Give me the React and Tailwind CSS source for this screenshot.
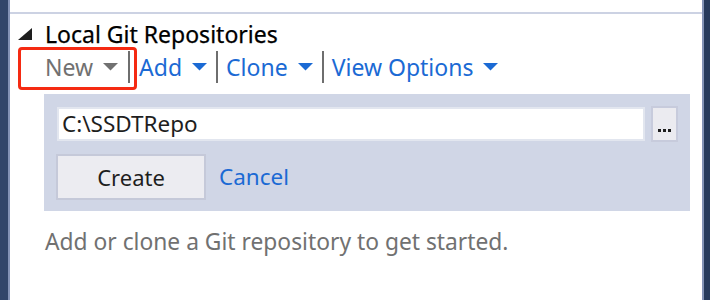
import React from "react";

const Caret = ({ color }) => (
  <svg width="15" height="8" viewBox="0 0 15 8" className="shrink-0">
    <polygon points="0,0 15,0 7.5,7.5" fill={color} />
  </svg>
);

const Sep = () => <div className="w-[2px] h-[32px] bg-[#6e6e6e] shrink-0" />;

export default function App() {
  return (
    <div
      className="w-[710px] h-[300px] flex bg-white overflow-hidden"
      style={{ fontFamily: '"Noto Sans", "Open Sans", sans-serif' }}
    >
      <div className="w-[8px] h-full bg-[#31466a] shrink-0" />
      <div className="w-[2px] h-full bg-[#8393b6] shrink-0" />
      <div className="flex-1 flex flex-col">
        <div className="h-[12px]" />
        <div className="h-[2px] bg-[#ccd2e3]" />
        <div className="flex items-start h-[33px] pl-[8px]">
          <svg width="14" height="12" viewBox="0 0 14 12" className="shrink-0 mt-[14px]">
            <polygon points="14,0 14,12 0,12" fill="#1e1e1e" />
          </svg>
          <span className="ml-[13px] mt-[5px] text-[23px] leading-[30px] text-[#000000] [-webkit-text-stroke:0.25px_#000000] whitespace-nowrap">
            Local Git Repositories
          </span>
        </div>
        <div className="relative flex items-center h-[43px] pb-[3px] pl-[35px] text-[23px] leading-[28px]">
          <div className="absolute left-[8px] top-0 w-[119px] h-[43px] border-[3px] border-[#f52a12] rounded-[4px]" />
          <span className="text-[#717171]">New</span>
          <span className="ml-[10px]"><Caret color="#717171" /></span>
          <span className="ml-[10px]"><Sep /></span>
          <span className="ml-[9px] text-[#1b6ad4]">Add</span>
          <span className="ml-[10px]"><Caret color="#1b6ad4" /></span>
          <span className="ml-[9px]"><Sep /></span>
          <span className="ml-[8px] text-[#1b6ad4]">Clone</span>
          <span className="ml-[10px]"><Caret color="#1b6ad4" /></span>
          <span className="ml-[9px]"><Sep /></span>
          <span className="ml-[8px] text-[#1b6ad4]">View Options</span>
          <span className="ml-[10px]"><Caret color="#1b6ad4" /></span>
        </div>
        <div className="ml-[34px] mt-[4px] w-[646px] bg-[#d0d6e6] px-[12px] pt-[12px] pb-[11px] flex flex-col">
          <div className="flex items-center">
            <div className="flex-1 h-[34px] ml-[1px] bg-white border-[2px] border-[#e2e6ef] flex items-center pl-[3px] text-[22.5px] text-[#1e1e1e]">
              C:\SSDTRepo
            </div>
            <div className="ml-[6px] w-[27px] h-[36px] bg-[#ebebf0] border-[2px] border-[#c7cbdc] flex items-end justify-center pb-[8px] gap-[2px]">
              <span className="w-[3px] h-[3px] bg-[#1e1e1e]" />
              <span className="w-[3px] h-[3px] bg-[#1e1e1e]" />
              <span className="w-[3px] h-[3px] bg-[#1e1e1e]" />
            </div>
          </div>
          <div className="flex items-center mt-[12px]">
            <div className="w-[150px] h-[46px] bg-[#ececf1] border-[2px] border-[#c5c9d9] flex items-center justify-center text-[22px] text-[#1e1e1e]">
              Create
            </div>
            <span className="ml-[13px] text-[22.5px] text-[#1b6ad4]">Cancel</span>
          </div>
        </div>
        <div className="ml-[35px] mt-[16px] text-[22.8px] leading-[30px] text-[#717171] whitespace-nowrap">
          Add or clone a Git repository to get started.
        </div>
      </div>
      <div className="w-[2px] h-full bg-[#8393b6] shrink-0" />
      <div className="w-[6px] h-full bg-[#263a5c] shrink-0" />
    </div>
  );
}
